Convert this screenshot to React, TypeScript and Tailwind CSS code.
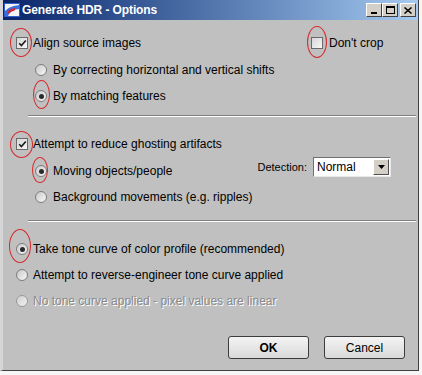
import type { ReactNode } from "react";

function CheckBox({ checked }: { checked?: boolean }) {
  return (
    <span className="w-[12px] h-[12px] shrink-0 border border-[#6a6a6a] bg-linear-to-br from-[#d6d6d6] to-[#f7f7f7] flex items-center justify-center">
      {checked && (
        <svg width="9" height="9" viewBox="0 0 9 9">
          <path d="M1.2 4.2 L3.4 6.6 L7.8 1.4" stroke="#1a1a1a" strokeWidth="1.6" fill="none" />
        </svg>
      )}
    </span>
  );
}

function Radio({ checked, disabled }: { checked?: boolean; disabled?: boolean }) {
  return (
    <span
      className={
        "w-[12px] h-[12px] shrink-0 rounded-full border flex items-center justify-center " +
        (disabled
          ? "border-[#9a9a9a] bg-linear-to-br from-[#cfcfcf] to-[#f2f2f2]"
          : "border-[#7c7c7c] bg-linear-to-br from-[#c9c9c9] to-[#f8f8f8]")
      }
    >
      {checked && <span className="w-[5px] h-[5px] rounded-full bg-[#2a2a2a]" />}
    </span>
  );
}

// red hand drawn circle that marks a control
function Mark({ className, children }: { className: string; children: ReactNode }) {
  return (
    <span className="relative flex">
      {children}
      <span className={"absolute pointer-events-none rounded-[50%] border-[1.5px] border-[#d42a2e] " + className} />
    </span>
  );
}

function Separator() {
  return <div className="ml-[12px] w-[388px] border-t border-t-[#808080] border-b border-b-white" />;
}

function AppIcon() {
  return (
    <svg width="16" height="14" viewBox="0 0 16 14">
      <rect x="0" y="0" width="16" height="14" fill="#2f5fd0" />
      <rect x="1" y="1" width="14" height="12" fill="#f4f4f4" />
      <path d="M1 13 L1 8 C5 4 9 3 15 2 L15 6 C10 6 6 9 4 13 Z" fill="#3a6fe0" />
      <path d="M3 9 C6 6 9 5 12 5 L10 8 C7 8 5 10 4 11 Z" fill="#d8262b" />
    </svg>
  );
}

function WinButton({ children, className }: { children: ReactNode; className?: string }) {
  return (
    <span
      className={
        "w-[16px] h-[14px] bg-[#d4d0c8] border border-t-white border-l-white border-r-[#404040] border-b-[#404040] flex items-center justify-center " +
        (className ?? "")
      }
    >
      {children}
    </span>
  );
}

export default function App() {
  return (
    <div className="w-[422px] h-[375px] bg-[#f6f6f6] overflow-hidden font-['Liberation_Sans',Arial,sans-serif] text-[12px] text-black">
      <div className="w-[419px] h-[371px] bg-[#c0c0c0] border-l-[3px] border-l-[#d6d6d6] border-r border-r-[#404040] border-b border-b-[#404040] flex flex-col">
        {/* title bar */}
        <div className="h-[20px] flex items-center bg-linear-to-r from-[#0a246a] to-[#a6caf0] pl-[1px] pr-[2px]">
          <AppIcon />
          <span className="ml-[2px] text-white font-bold text-[12px] tracking-[-0.1px]">Generate HDR - Options</span>
          <div className="ml-auto flex items-center">
            <WinButton>
              <span className="mt-[6px] w-[6px] h-[2px] bg-black" />
            </WinButton>
            <WinButton>
              <span className="w-[9px] h-[8px] border border-black border-t-2" />
            </WinButton>
            <WinButton className="ml-[2px]">
              <svg width="8" height="7" viewBox="0 0 8 7">
                <path d="M0.5 0.5 L7.5 6.5 M7.5 0.5 L0.5 6.5" stroke="black" strokeWidth="1.5" />
              </svg>
            </WinButton>
          </div>
        </div>

        <div className="flex flex-col pl-[13px]">
          {/* align */}
          <div className="mt-[10px] h-[26px] flex items-center">
            <div className="flex-1 flex items-center gap-[5px]">
              <Mark className="-left-[6px] -top-[9px] w-[22px] h-[29px]">
                <CheckBox checked />
              </Mark>
              <span>Align source images</span>
            </div>
            <div className="w-[107px] flex items-center gap-[6px]">
              <Mark className="-left-[4px] -top-[11px] w-[20px] h-[32px]">
                <CheckBox />
              </Mark>
              <span>Don't crop</span>
            </div>
          </div>
          <div className="mt-[1px] h-[26px] flex items-center gap-[6px] pl-[19px]">
            <Radio />
            <span>By correcting horizontal and vertical shifts</span>
          </div>
          <div className="h-[26px] flex items-center gap-[6px] pl-[19px]">
            <Mark className="-left-[2px] -top-[10px] w-[17px] h-[29px]">
              <Radio checked />
            </Mark>
            <span>By matching features</span>
          </div>

          <div className="mt-[6px]">
            <Separator />
          </div>

          {/* ghosting */}
          <div className="mt-[14px] h-[26px] flex items-center gap-[5px]">
            <Mark className="-left-[6px] -top-[7px] w-[23px] h-[27px]">
              <CheckBox checked />
            </Mark>
            <span>Attempt to reduce ghosting artifacts</span>
          </div>
          <div className="mt-[1px] h-[26px] flex items-center pl-[19px] pr-[27px]">
            <div className="flex-1 flex items-center gap-[6px]">
              <Mark className="-left-[3px] -top-[8px] w-[16px] h-[26px]">
                <Radio checked />
              </Mark>
              <span>Moving objects/people</span>
            </div>
            <div className="flex items-center gap-[6px] -mt-[8px]">
              <span className="text-[11px]">Detection:</span>
              <div className="w-[78px] h-[20px] bg-white border border-t-[#707070] border-l-[#707070] border-r-[#e8e8e8] border-b-[#e8e8e8] flex items-center">
                <span className="pl-[3px] flex-1">Normal</span>
                <span className="w-[16px] h-[16px] mr-[1px] bg-[#d4d0c8] border border-t-white border-l-white border-r-[#505050] border-b-[#505050] flex items-center justify-center">
                  <svg width="7" height="4" viewBox="0 0 7 4">
                    <path d="M0 0 L7 0 L3.5 4 Z" fill="black" />
                  </svg>
                </span>
              </div>
            </div>
          </div>
          <div className="h-[26px] flex items-center gap-[6px] pl-[19px]">
            <Radio />
            <span>Background movements (e.g. ripples)</span>
          </div>

          <div className="mt-[10px]">
            <Separator />
          </div>

          {/* tone curve */}
          <div className="mt-[14px] h-[26px] flex items-center gap-[5px]">
            <Mark className="-left-[7px] -top-[14px] w-[22px] h-[34px]">
              <Radio checked />
            </Mark>
            <span>Take tone curve of color profile (recommended)</span>
          </div>
          <div className="h-[26px] flex items-center gap-[5px]">
            <Radio />
            <span>Attempt to reverse-engineer tone curve applied</span>
          </div>
          <div className="h-[26px] flex items-center gap-[5px]">
            <Radio disabled />
            <span className="text-[#8a8a8a] [text-shadow:1px_1px_0_#ffffff]">No tone curve applied - pixel values are linear</span>
          </div>

          {/* buttons */}
          <div className="mt-[22px] flex justify-end gap-[15px] pr-[13px]">
            <button className="w-[81px] h-[23px] rounded-[3px] border border-[#3c3c3c] bg-linear-to-b from-[#f4f4f4] to-[#d9d9d9] font-bold text-[12px]">
              OK
            </button>
            <button className="w-[81px] h-[23px] rounded-[3px] border border-[#3c3c3c] bg-linear-to-b from-[#f4f4f4] to-[#d9d9d9] text-[12px]">
              Cancel
            </button>
          </div>
        </div>
      </div>
    </div>
  );
}
